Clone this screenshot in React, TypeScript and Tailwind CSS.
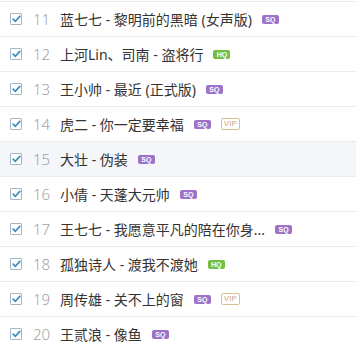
import React from "react";

type Song = {
  no: number;
  title: string;
  tags: ("SQ" | "HQ" | "VIP")[];
  hover?: boolean;
};

const songs: Song[] = [
  { no: 11, title: "蓝七七 - 黎明前的黑暗 (女声版)", tags: ["SQ"] },
  { no: 12, title: "上河Lin、司南 - 盗将行", tags: ["HQ"] },
  { no: 13, title: "王小帅 - 最近 (正式版)", tags: ["SQ"] },
  { no: 14, title: "虎二 - 你一定要幸福", tags: ["SQ", "VIP"] },
  { no: 15, title: "大壮 - 伪装", tags: ["SQ"], hover: true },
  { no: 16, title: "小倩 - 天蓬大元帅", tags: ["SQ"] },
  { no: 17, title: "王七七 - 我愿意平凡的陪在你身...", tags: ["SQ"] },
  { no: 18, title: "孤独诗人 - 渡我不渡她", tags: ["HQ"] },
  { no: 19, title: "周传雄 - 关不上的窗", tags: ["SQ", "VIP"] },
  { no: 20, title: "王贰浪 - 像鱼", tags: ["SQ"] },
];

function Tag({ kind }: { kind: "SQ" | "HQ" | "VIP" }) {
  if (kind === "VIP") {
    return (
      <span className="flex h-[12px] w-[19px] items-center justify-center rounded-[2px] border border-[#d9bf95] text-[8px] leading-none text-[#c9a979] [font-family:'Liberation_Sans',sans-serif]">
        VIP
      </span>
    );
  }
  return (
    <span
      className={`flex h-[9px] w-[17px] items-center justify-center rounded-[2px] text-[7px] font-bold leading-none text-white [font-family:'Liberation_Sans',sans-serif] ${
        kind === "SQ" ? "bg-[#9d72c8]" : "bg-[#6fc043]"
      }`}
    >
      {kind}
    </span>
  );
}

function Check() {
  return (
    <span className="flex h-[12px] w-[12px] shrink-0 items-center justify-center rounded-[1px] border border-[#a3b7c6] bg-white">
      <svg width="9" height="8" viewBox="0 0 9 8" fill="none">
        <path
          d="M1.2 4.2 L3.4 6.3 L7.8 1.4"
          stroke="#3a8fb6"
          strokeWidth="1.7"
          strokeLinecap="round"
          strokeLinejoin="round"
        />
      </svg>
    </span>
  );
}

export default function App() {
  return (
    <div className="h-[355px] w-[356px] overflow-hidden bg-white pt-px">
      {songs.map((s) => (
        <div
          key={s.no}
          className={`flex h-[35px] items-center border-t border-[#ececec] pl-[10px] ${
            s.hover ? "bg-[#f4f6f9]" : "bg-white"
          }`}
        >
          <Check />
          <span className="ml-[11px] w-[25px] text-[15px] font-light text-[#a2a2a2] [font-family:'Noto_Sans',sans-serif]">
            {s.no}
          </span>
          <span className="ml-[2px] whitespace-nowrap text-[14px] text-[#333] [font-family:'Noto_Sans','Noto_Sans_CJK_SC',sans-serif]">
            {s.title}
          </span>
          <div className="ml-[10px] flex items-center gap-[10px]">
            {s.tags.map((t) => (
              <Tag key={t} kind={t} />
            ))}
          </div>
        </div>
      ))}
    </div>
  );
}
